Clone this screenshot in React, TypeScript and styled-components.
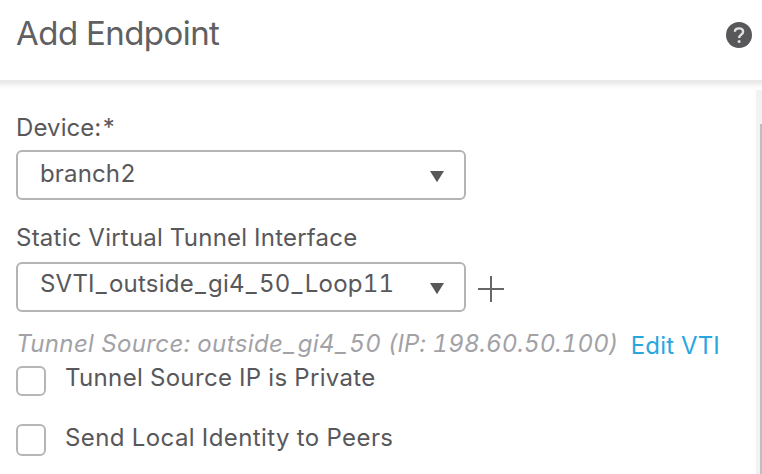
import React from "react";
import styled, { createGlobalStyle } from "styled-components";

const GlobalStyle = createGlobalStyle`
  * { box-sizing: border-box; }
  body { margin: 0; background: #fff; overflow: hidden; }
`;

const Dialog = styled.div`
  display: flex;
  flex-direction: column;
  width: 762px;
  height: 474px;
  overflow: hidden;
  background: #fff;
  color: #58585b;
  font-family: Inter, "Liberation Sans", sans-serif;
  font-size: 24px;
  line-height: 30px;
  font-variant-numeric: tabular-nums;
`;

const Header = styled.header`
  display: flex;
  flex: none;
  justify-content: space-between;
  height: 80px;
  padding: 13px 10px 0 16px;
`;

const Title = styled.h1`
  margin: 0;
  color: #606063;
  font-size: 33px;
  font-weight: 400;
  line-height: 40px;
  letter-spacing: -0.54px;
  white-space: nowrap;
`;

const HelpIcon = styled.svg`
  width: 26px;
  height: 26px;
  margin-top: 9px;
`;

const HeaderShadow = styled.div`
  flex: none;
  height: 10px;
  background: linear-gradient(#e8e8e8 0, #ececec 30%, #f7f7f7 55%, #fff 100%);
`;

const Body = styled.div`
  display: flex;
  flex: 1;
  min-height: 0;
`;

const Form = styled.form`
  flex: 1;
  min-width: 0;
  padding: 23px 0 0 16px;
`;

const Field = styled.div<{ $gap: number }>`
  margin-bottom: ${(p) => p.$gap}px;
`;

const Text = styled.span<{ $spacing?: number }>`
  display: block;
  white-space: nowrap;
  letter-spacing: ${(p) => p.$spacing ?? 0}px;
`;

const Underscore = styled.span`
  padding: 0 2px 0 1px;
`;

const Row = styled.div<{ $top: number }>`
  display: flex;
  align-items: center;
  gap: 12px;
  margin-top: ${(p) => p.$top}px;
`;

const Select = styled.div<{ $textTop: number }>`
  display: flex;
  justify-content: space-between;
  align-items: flex-start;
  width: 450px;
  height: 50px;
  padding: 0 19px 0 22px;
  border: 2px solid #b4b4b4;
  border-radius: 6px;

  > span {
    margin-top: ${(p) => p.$textTop}px;
  }
`;

const Caret = styled.svg`
  width: 16px;
  height: 13px;
  margin-top: 18px;
`;

const PlusIcon = styled.svg`
  width: 26px;
  height: 26px;
  margin-top: 3px;
`;

const NoteRow = styled.div`
  display: flex;
  justify-content: space-between;
  width: 704px;
  height: 34px;
`;

const Note = styled.em<{ $spacing: number }>`
  color: #a2a2a6;
  font-weight: 400;
  white-space: nowrap;
  letter-spacing: ${(p) => p.$spacing}px;
`;

const Address = styled.span`
  letter-spacing: 0.1px;
`;

const EditLink = styled.a`
  padding-top: 2px;
  color: #28a7df;
  letter-spacing: 0.2px;
  white-space: nowrap;
`;

const CheckRow = styled.label`
  display: flex;
  gap: 19px;
  height: 60px;
`;

const CheckBox = styled.span<{ $height: number; $top: number }>`
  width: 30px;
  height: ${(p) => p.$height}px;
  margin-top: ${(p) => p.$top}px;
  border: 2px solid #b6b6b6;
  border-radius: 6px;
`;

const ScrollTrack = styled.div`
  width: 6px;
  padding: 34px 0 0 4px;
  background: #f2f2f2;
`;

const ScrollThumb = styled.div`
  height: 100%;
  background: #bebebe;
`;

function DownCaret() {
  return (
    <Caret viewBox="0 0 16 13" aria-hidden="true">
      <path d="M1 1H15L8 12.3Z" fill="#58585b" />
    </Caret>
  );
}

function InterfaceName({ name }: { name: string }) {
  return name.split("_").map((part, i) => (
    <React.Fragment key={i}>
      {i > 0 && <Underscore>_</Underscore>}
      {part}
    </React.Fragment>
  ));
}

export default function App() {
  return (
    <>
      <GlobalStyle />
      <Dialog>
        <Header>
          <Title>Add Endpoint</Title>
          <HelpIcon viewBox="0 0 26 26" aria-label="Help">
            <circle cx="13" cy="13" r="13" fill="#58585b" />
            <path d="M8.9 9.7C9 7.5 10.7 6.4 13 6.4C15.4 6.4 17.1 7.7 17.1 9.7C17.1 12.7 13.1 12.7 13.1 16" fill="none" stroke="#e2e2e2" strokeWidth="2.4" />
            <circle cx="13.1" cy="19.6" r="1.5" fill="#e2e2e2" />
          </HelpIcon>
        </Header>
        <HeaderShadow />
        <Body>
          <Form>
            <Field $gap={23}>
              <Text $spacing={0.1}>Device:*</Text>
              <Row $top={7}>
                <Select $textTop={7}>
                  <Text $spacing={0.15}>branch2</Text>
                  <DownCaret />
                </Select>
              </Row>
            </Field>
            <Field $gap={17}>
              <Text $spacing={0.24}>Static Virtual Tunnel Interface</Text>
              <Row $top={9}>
                <Select $textTop={5}>
                  <Text $spacing={0.22}>
                    <InterfaceName name="SVTI_outside_gi4_50_Loop11" />
                  </Text>
                  <DownCaret />
                </Select>
                <PlusIcon viewBox="0 0 26 26" aria-label="Add">
                  <path d="M13 0V26M0 13H26" stroke="#67676a" strokeWidth="2" />
                </PlusIcon>
              </Row>
            </Field>
            <NoteRow>
              <Note $spacing={0.39}>
                Tunnel Source: <InterfaceName name="outside_gi4_50" />{" "}
                <Address>(IP: 198.60.50.100)</Address>
              </Note>
              <EditLink>Edit VTI</EditLink>
            </NoteRow>
            <CheckRow>
              <CheckBox $height={30} $top={3} />
              <Text $spacing={0.34}>Tunnel Source IP is Private</Text>
            </CheckRow>
            <CheckRow>
              <CheckBox $height={32} $top={1} />
              <Text $spacing={0.41}>Send Local Identity to Peers</Text>
            </CheckRow>
          </Form>
          <ScrollTrack>
            <ScrollThumb />
          </ScrollTrack>
        </Body>
      </Dialog>
    </>
  );
}
